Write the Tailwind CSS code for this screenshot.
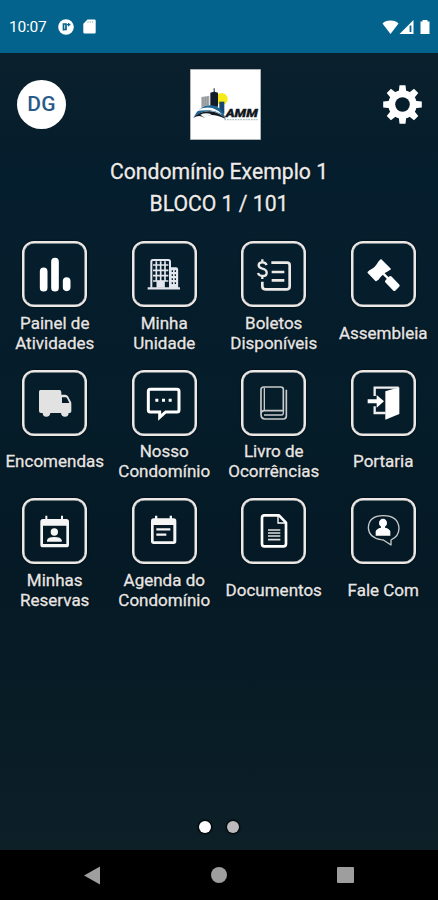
<!DOCTYPE html>
<html lang="pt-BR">
<head>
<meta charset="utf-8">
<title>Condomínio</title>
<script src="https://cdn.jsdelivr.net/npm/@tailwindcss/browser@4"></script>
</head>
<body class="w-[438px] h-[900px] overflow-hidden bg-black text-[#ececec] font-['Roboto',sans-serif]">
<div class="flex flex-col h-[900px]">
  <header class="h-[53px] shrink-0 bg-[#03638c] flex items-center px-[9px] text-white">
    <span class="text-[15.5px] leading-[20px] w-[49px] tracking-[-0.2px]">10:07</span>
    <svg class="w-[16px] h-[16px]" viewBox="0 0 16 16"><circle cx="8" cy="8" r="7.8" fill="#fff"/><path d="M5.500 4.300v7.200M5.500 5h2.500v5.500H5.500" fill="none" stroke="#03638c" stroke-width="1.700"/><path d="M9 5.600h3.400M10.700 4v3.200" fill="none" stroke="#03638c" stroke-width="1.300"/></svg>
    <svg class="ml-[9px] w-[13px] h-[15px]" viewBox="0 0 13 15"><path d="M4.5.5H11.5a1.2 1.2 0 0 1 1.2 1.2V13.3a1.2 1.2 0 0 1-1.2 1.2H1.5A1.2 1.2 0 0 1 .3 13.300V4.700z" fill="#fff"/><path d="M5 2v2M7.300 2v2M9.600 2v2" stroke="#9cc3d4" stroke-width=".9"/></svg>
    <svg class="ml-auto -mr-[3px] w-[50px] h-[16px]" viewBox="0 0 50 16"><path d="M0.500 4.500Q3 1.500 8.500 1.500T16.500 4.500L8.500 15z" fill="#fff"/><path d="M31.500 1V15H17.500z" fill="#fff"/><path d="M28.500 6.500V13" stroke="#03638c" stroke-width="1.800"/><path d="M40.500 1h5v1.500h2V15h-9V2.500h2z" fill="#fff"/></svg>
  </header>

  <main class="h-[797px] shrink-0 flex flex-col bg-linear-to-b from-[#0b202d] via-[#04161f] via-60% to-[#0d2028]">
    <div class="h-full flex flex-col bg-linear-to-b from-[#051e2d]/0 via-[#051e2d] via-15% to-[#051e2d]/0">
      <div class="h-[102px] shrink-0 flex items-center justify-between pl-[17px] pr-[16px]">
        <div class="w-[49px] h-[49px] rounded-full bg-white flex items-center justify-center pt-[2px] text-[#285b8b] font-medium text-[21px] tracking-[0.2px]">DG</div>
        <svg class="w-[71px] h-[71px] ml-[1px]" viewBox="29 26 213 213">
          <rect x="29" y="26" width="213" height="213" fill="#8b8f92"/><rect x="31" y="28" width="209" height="209" fill="#fff"/>
          <circle cx="124" cy="116" r="18" fill="#f6ea18"/>
          <path d="M63 110l24-4v36H63z" fill="#a7a9ac"/><path d="M68 112v25M75 110v26M82 110v26" stroke="#85898d" stroke-width="2"/>
          <path d="M90 97l10-3V84h3v10l10 3v42H90z" fill="#111d2b"/>
          <path d="M117 124h15v36h-15z" fill="#174873"/>
          <path d="M39 172q18-38 55-37 30 2 42 40-22-22-47-23-28 0-50 20z" fill="#1b6792"/>
          <path d="M48 152q24-15 50-8 18 7 27 18-19-11-37-12-23-1-40 2z" fill="#fff"/>
          <path d="M39 173q18-21 50-20 29 3 47 23-24-12-42-12-16 0-22 8-16-10-33 1z" fill="#121923"/>
          <path d="M60 163q16-8 34-1l-22 10z" fill="#f3f6f7"/>
          <text x="136" y="170" textLength="96" lengthAdjust="spacingAndGlyphs" font-family="Roboto, sans-serif" font-weight="900" font-style="italic" font-size="34" fill="#111820" stroke="#111820" stroke-width="1">AMM</text>
          <path d="M132 178H232" stroke="#a9bfc1" stroke-width="4" stroke-dasharray="5 3"/>
        </svg>
        <svg class="w-[39px] h-[39px]" viewBox="-19.500 -19.500 39 39">
          <g fill="#fff"><circle r="14.300"/>
          <g id="tooth"><path d="M-3.800-12L-3-19.300H3L3.800-12zM-3.800 12L-3 19.300H3L3.800 12z"/></g>
          <use href="#tooth" transform="rotate(45)"/><use href="#tooth" transform="rotate(90)"/><use href="#tooth" transform="rotate(135)"/></g>
          <circle r="7.300" fill="#061e2b"/>
        </svg>
      </div>

      <div class="h-[86px] pt-[1px] shrink-0 text-center text-[21.200px] leading-[32px] [-webkit-text-stroke:0.3px] [text-shadow:0_0_2px_#000]">
        <p>Condomínio Exemplo 1</p>
        <p>BLOCO 1 / 101</p>
      </div>

      <div class="grid grid-cols-4 auto-rows-[128.500px] text-center text-[17px] leading-[20px] text-[#e6e6e6] [-webkit-text-stroke:0.3px] [text-shadow:0_0_2px_#000]">
        <div class="flex flex-col items-center">
          <div class="w-[65px] h-[66px] shrink-0 border-2 border-[#ece8e6] rounded-[12px] flex items-center justify-center shadow-[inset_0_0_0_0.5px_#ece8e6,0_0_2px_#000]">
            <svg class="w-[36px] h-[36px]" viewBox="112 77 108 108"><path d="M132 123v49M166 94v78M201 152v19" stroke="#fff" stroke-width="23" stroke-linecap="round"/></svg>
          </div>
          <div class="h-[51px] flex items-center whitespace-nowrap">Painel de<br>Atividades</div>
        </div>
        <div class="flex flex-col items-center">
          <div class="w-[65px] h-[66px] shrink-0 border-2 border-[#ece8e6] rounded-[12px] flex items-center justify-center shadow-[inset_0_0_0_0.5px_#ece8e6,0_0_2px_#000]">
            <svg class="w-[36px] h-[36px]" viewBox="441 77 108 108"><g fill="none" stroke="#e4e6ee" stroke-width="5"><path d="M446 174H543" stroke-width="7"/><path d="M457 172V94q0-5 5-5h46q5 0 5 5v78" stroke-width="6"/><path d="M513 113h18q4 0 4 4v55H513z" fill="#e4e6ee"/><path d="M472 93v60M485 93v60M498 93v60M462 104h46M462 120h46M462 136h46M462 152h46" stroke-width="5"/><path d="M475 172v-18h20v18" fill="#e4e6ee"/></g><path d="M520 120v45M529 120v45" stroke="#061e2b" stroke-width="4" stroke-dasharray="5 7"/></svg>
          </div>
          <div class="h-[51px] flex items-center whitespace-nowrap">Minha<br>Unidade</div>
        </div>
        <div class="flex flex-col items-center">
          <div class="w-[65px] h-[66px] shrink-0 border-2 border-[#ece8e6] rounded-[12px] flex items-center justify-center shadow-[inset_0_0_0_0.5px_#ece8e6,0_0_2px_#000]">
            <svg class="w-[36px] h-[36px]" viewBox="111 77 108 108"><g fill="none" stroke="#ece9e6" stroke-width="8"><path d="M143 104q-3-8-13-8-11 0-11 9 0 7 11 10 13 3 13 12 0 10-12 10-11 0-14-9M130 87v9M130 137v9" stroke-width="7"/><path d="M157 97h47q8 0 8 8v63q0 9-8 9h-65q-9 0-9-9v-14"/><path d="M158 125h38M158 150h38"/></g></svg>
          </div>
          <div class="h-[51px] flex items-center whitespace-nowrap">Boletos<br>Disponíveis</div>
        </div>
        <div class="flex flex-col items-center">
          <div class="w-[65px] h-[66px] shrink-0 border-2 border-[#ece8e6] rounded-[12px] flex items-center justify-center shadow-[inset_0_0_0_0.5px_#ece8e6,0_0_2px_#000]">
            <svg class="w-[36px] h-[36px]" viewBox="439 77 108 108"><g fill="#fff" stroke="#fff" stroke-linejoin="round"><path d="M487 89L514 116 506 121Q490 128 478 146L472 150 449 126 455 121Q472 113 481 95z" stroke-width="5"/><path d="M494 130L509 145" stroke-width="7"/><path d="M515 142L538 166 527 177 504 153z" stroke-width="10"/></g></svg>
          </div>
          <div class="h-[51px] flex items-center whitespace-nowrap">Assembleia</div>
        </div>

        <div class="flex flex-col items-center">
          <div class="w-[65px] h-[66px] shrink-0 border-2 border-[#ece8e6] rounded-[12px] flex items-center justify-center shadow-[inset_0_0_0_0.5px_#ece8e6,0_0_2px_#000]">
            <svg class="w-[36px] h-[36px]" viewBox="112 73 108 108"><path d="M122 88h57q6 0 6 6v8h12q5 0 8 5l8 15q2 3 2 7v23q0 5-5 5h-3q0 11-11 11t-12-11h-32q-1 11-12 11t-11-11h-5q-6 0-6-6V94q0-6 4-6z" fill="#e2e2e3"/><path d="M187 110h10q4 0 6 4l6 13h-22z" fill="#061b26"/></svg>
          </div>
          <div class="h-[51px] flex items-center whitespace-nowrap">Encomendas</div>
        </div>
        <div class="flex flex-col items-center">
          <div class="w-[65px] h-[66px] shrink-0 border-2 border-[#ece8e6] rounded-[12px] flex items-center justify-center shadow-[inset_0_0_0_0.5px_#ece8e6,0_0_2px_#000]">
            <svg class="w-[36px] h-[36px]" viewBox="441 73 108 108"><path d="M454 86h80q6 0 6 6v56q0 6-6 6H500L482 170V154H454q-6 0-6-6V92q0-6 6-6z" fill="none" stroke="#fff" stroke-width="9"/><path d="M469 114h9v9h-9zM489 114h9v9h-9zM509 114h9v9h-9z" fill="#fff"/></svg>
          </div>
          <div class="h-[51px] flex items-center whitespace-nowrap">Nosso<br>Condomínio</div>
        </div>
        <div class="flex flex-col items-center">
          <div class="w-[65px] h-[66px] shrink-0 border-2 border-[#ece8e6] rounded-[12px] flex items-center justify-center shadow-[inset_0_0_0_0.5px_#ece8e6,0_0_2px_#000]">
            <svg class="w-[36px] h-[36px]" viewBox="111 73 108 108"><g fill="none" stroke="#c9caca" stroke-width="5"><path d="M126 161V87q0-8 8-8h51q8 0 8 7v64H136q-10 0-10 11 0 14 12 14h55q9 0 9-9V87"/><path d="M136 81v69M135 163h53q5 0 5-7v-8" stroke-width="4"/></g></svg>
          </div>
          <div class="h-[51px] flex items-center whitespace-nowrap">Livro de<br>Ocorrências</div>
        </div>
        <div class="flex flex-col items-center">
          <div class="w-[65px] h-[66px] shrink-0 border-2 border-[#ece8e6] rounded-[12px] flex items-center justify-center shadow-[inset_0_0_0_0.5px_#ece8e6,0_0_2px_#000]">
            <svg class="w-[36px] h-[36px]" viewBox="439 73 108 108"><path d="M500 92l42-12v80l-42 17z" fill="#fff"/><path d="M468 106V81h72M468 137v20h33" fill="none" stroke="#eee" stroke-width="7"/><path d="M447 116h27v-13l22 19-22 19v-13h-27z" fill="#fff"/></svg>
          </div>
          <div class="h-[51px] flex items-center whitespace-nowrap">Portaria</div>
        </div>

        <div class="flex flex-col items-center">
          <div class="w-[65px] h-[66px] shrink-0 border-2 border-[#ece8e6] rounded-[12px] flex items-center justify-center shadow-[inset_0_0_0_0.5px_#ece8e6,0_0_2px_#000]">
            <svg class="w-[36px] h-[36px]" viewBox="112 69 108 108"><path d="M137 77h6v10h41V77h6v10h10q8 0 8 8v69q0 8-8 8h-70q-8 0-8-8V95q0-8 8-8h7zM130 107v55h70v-55z" fill="#f5f5f5" fill-rule="evenodd"/><circle cx="164" cy="126" r="11" fill="#f5f5f5"/><path d="M142 155v-4q2-10 22-10t22 10v4z" fill="#f5f5f5"/></svg>
          </div>
          <div class="h-[51px] flex items-center whitespace-nowrap">Minhas<br>Reservas</div>
        </div>
        <div class="flex flex-col items-center">
          <div class="w-[65px] h-[66px] shrink-0 border-2 border-[#ece8e6] rounded-[12px] flex items-center justify-center shadow-[inset_0_0_0_0.5px_#ece8e6,0_0_2px_#000]">
            <svg class="w-[36px] h-[36px]" viewBox="441 69 108 108"><path d="M468 77h7v8h37v-8h7v8h5q8 0 8 8v61q0 8-8 8h-60q-8 0-8-8V93q0-8 8-8h4zM464 105v49h59v-49z" fill="#f5f5f5" fill-rule="evenodd"/><path d="M472 118h42M472 134h30" stroke="#f5f5f5" stroke-width="7"/></svg>
          </div>
          <div class="h-[51px] flex items-center whitespace-nowrap">Agenda do<br>Condomínio</div>
        </div>
        <div class="flex flex-col items-center">
          <div class="w-[65px] h-[66px] shrink-0 border-2 border-[#ece8e6] rounded-[12px] flex items-center justify-center shadow-[inset_0_0_0_0.5px_#ece8e6,0_0_2px_#000]">
            <svg class="w-[36px] h-[36px]" viewBox="111 69 108 108"><path d="M136 76h44l21 22v63q0 8-8 8h-57q-7 0-7-8V84q0-8 7-8z" fill="none" stroke="#fff" stroke-width="8" stroke-linejoin="round"/><path d="M177 78v21h22" fill="none" stroke="#fff" stroke-width="4"/><path d="M147 120h37M147 129h37M147 138h37M147 149h37" stroke="#dedede" stroke-width="5"/></svg>
          </div>
          <div class="h-[51px] flex items-center whitespace-nowrap">Documentos</div>
        </div>
        <div class="flex flex-col items-center">
          <div class="w-[65px] h-[66px] shrink-0 border-2 border-[#ece8e6] rounded-[12px] flex items-center justify-center shadow-[inset_0_0_0_0.5px_#ece8e6,0_0_2px_#000]">
            <svg class="w-[36px] h-[36px]" viewBox="439 69 108 108"><path d="M517 165v-15Q541 139 541 114 538 77 494 77T449 114Q451 143 487 149L494 150z" fill="none" stroke="#c8caca" stroke-width="4" stroke-linejoin="round"/><ellipse cx="493" cy="99" rx="12" ry="13" fill="#fff"/><path d="M487 108h12v5q14 3 16 11v13h-44v-13q2-8 16-11z" fill="#fff"/></svg>
          </div>
          <div class="h-[51px] flex items-center whitespace-nowrap">Fale Com</div>
        </div>
      </div>

      <div class="mt-auto h-[46px] flex justify-center gap-[15.500px]">
        <div class="mt-[17px] w-[12px] h-[12px] rounded-full bg-white shadow-[0_0_2px_1px_#000]"></div>
        <div class="mt-[17px] w-[12px] h-[12px] rounded-full bg-[#bcbabd] shadow-[0_0_2px_1px_#000]"></div>
      </div>
    </div>
  </main>

  <nav class="h-[50px] shrink-0 bg-black flex items-center justify-between pl-[84px] pr-[84px]">
    <svg class="w-[16px] h-[19px]" viewBox="0 0 16 19"><path d="M0 9.500L16 .5v18z" fill="#9e9e9e"/></svg>
    <div class="w-[16px] h-[16px] rounded-full bg-[#9e9e9e]"></div>
    <div class="w-[17px] h-[16px] rounded-[1px] bg-[#9e9e9e]"></div>
  </nav>
</div>
</body>
</html>
